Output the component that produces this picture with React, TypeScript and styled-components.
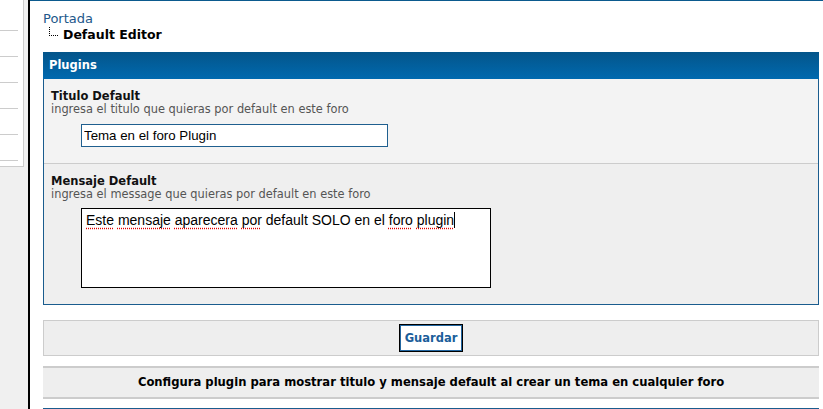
import React from 'react';
import styled, { createGlobalStyle } from 'styled-components';

const GlobalStyle = createGlobalStyle`
  html, body {
    margin: 0;
    padding: 0;
    background: #ffffff;
    font-family: "DejaVu Sans", Verdana, sans-serif;
  }
`;

const Page = styled.div`
  display: flex;
  width: 823px;
  height: 409px;
  overflow: hidden;
`;

const Sidebar = styled.aside`
  width: 28px;
  flex-shrink: 0;
  background: #f0f0f0;
  border-right: 2px solid #000000;
`;

const SideBox = styled.div`
  width: 18px;
  padding: 5px 5px 5px 0;
  background: #ffffff;
  border-right: 1px solid #cccccc;
  border-bottom: 1px solid #cccccc;
`;

const SideRow = styled.div`
  height: 25px;
  border-bottom: 1px solid #cccccc;
`;

const Content = styled.main`
  flex: 1;
  border-top: 1px solid #0b5a8e;
  padding: 0 4px 0 13px;
`;

const Breadcrumb = styled.div`
  padding-top: 10px;
  height: 51px;
  box-sizing: border-box;
`;

const CrumbLink = styled.a`
  display: block;
  color: #22578a;
  font-size: 13px;
  line-height: 16px;
  text-decoration: none;
`;

const CrumbCurrent = styled.div`
  position: relative;
  padding-left: 20px;
  font-size: 12.5px;
  font-weight: bold;
  line-height: 16px;
  color: #000000;

  &::before {
    content: '';
    position: absolute;
    left: 6px;
    top: 0;
    width: 8px;
    height: 8px;
    border-left: 1px dotted #000000;
    border-bottom: 1px dotted #000000;
  }
`;

const Panel = styled.section`
  border: 1px solid #1a5c8e;
  border-top: none;
`;

const PanelHeader = styled.div`
  height: 27px;
  margin: 0 -1px;
  padding: 0 6px;
  background: linear-gradient(#04558a, #0069af);
  color: #ffffff;
  font-size: 11.5px;
  font-weight: bold;
  line-height: 27px;
`;

const FieldRow = styled.div<{ $bg: string; $height: number; $last?: boolean }>`
  height: ${(p) => p.$height}px;
  box-sizing: border-box;
  padding: 10px 7px 0;
  background: ${(p) => p.$bg};
  border-bottom: ${(p) => (p.$last ? 'none' : '1px solid #cccccc')};
`;

const FieldTitle = styled.div`
  font-size: 11.5px;
  font-weight: bold;
  line-height: 14px;
  color: #111111;
`;

const FieldHint = styled.div`
  font-size: 11.4px;
  line-height: 13px;
  color: #555555;
`;

const TextInput = styled.input`
  display: block;
  margin: 8px 0 0 30px;
  width: 307px;
  height: 23px;
  box-sizing: border-box;
  padding: 0 2px;
  border: 1px solid #1f5f8f;
  background: #ffffff;
  font-family: "Liberation Sans", Arial, sans-serif;
  font-size: 13.3px;
  color: #000000;
  outline: none;
`;

const TextBox = styled.div`
  margin: 7px 0 0 30px;
  width: 410px;
  height: 80px;
  box-sizing: border-box;
  padding: 3px 4px;
  border: 1px solid #000000;
  background: #ffffff;
  font-family: "Liberation Sans", Arial, sans-serif;
  font-size: 14px;
  line-height: 17px;
  color: #000000;
`;

const Misspelled = styled.span`
  text-decoration: underline dotted #e00000;
  text-underline-offset: 3px;
`;

const Caret = styled.span`
  display: inline-block;
  width: 1px;
  height: 16px;
  background: #000000;
  vertical-align: -3px;
`;

const ButtonBar = styled.div`
  margin-top: 15px;
  height: 36px;
  box-sizing: border-box;
  border: 1px solid #cccccc;
  background: #eeeeee;
  display: flex;
  justify-content: center;
  align-items: center;
`;

const SaveButton = styled.button`
  width: 64px;
  height: 28px;
  padding: 0;
  border: 1px solid #000000;
  box-shadow: inset 0 0 0 1px #2266a0;
  background: #ffffff;
  color: #1b5e9a;
  font-family: "DejaVu Sans", Verdana, sans-serif;
  font-size: 11.5px;
  font-weight: bold;
  cursor: pointer;
`;

const InfoBar = styled.div`
  margin-top: 10px;
  height: 33px;
  box-sizing: border-box;
  border-top: 2px solid #cccccc;
  border-bottom: 2px solid #cccccc;
  background: #eeeeee;
  text-align: center;
  font-size: 11.6px;
  font-weight: bold;
  line-height: 29px;
  color: #000000;
`;

const NextPanel = styled.div`
  margin-top: 9px;
  border-top: 2px solid #1a5c8e;
`;

export default function App() {
  return (
    <>
      <GlobalStyle />
      <Page>
        <Sidebar>
          <SideBox>
            {[0, 1, 2, 3, 4, 5].map((i) => (
              <SideRow key={i} />
            ))}
          </SideBox>
        </Sidebar>
        <Content>
          <Breadcrumb>
            <CrumbLink href="#">Portada</CrumbLink>
            <CrumbCurrent>Default Editor</CrumbCurrent>
          </Breadcrumb>
          <Panel>
            <PanelHeader>Plugins</PanelHeader>
            <FieldRow $bg="#f3f3f3" $height={85}>
              <FieldTitle>Titulo Default</FieldTitle>
              <FieldHint>ingresa el titulo que quieras por default en este foro</FieldHint>
              <TextInput defaultValue="Tema en el foro Plugin" />
            </FieldRow>
            <FieldRow $bg="#efefef" $height={140} $last>
              <FieldTitle>Mensaje Default</FieldTitle>
              <FieldHint>ingresa el message que quieras por default en este foro</FieldHint>
              <TextBox>
                <Misspelled>Este</Misspelled> <Misspelled>mensaje</Misspelled>{' '}
                <Misspelled>aparecera</Misspelled> <Misspelled>por</Misspelled> default SOLO en el{' '}
                <Misspelled>foro</Misspelled> <Misspelled>plugin</Misspelled>
                <Caret />
              </TextBox>
            </FieldRow>
          </Panel>
          <ButtonBar>
            <SaveButton type="button">Guardar</SaveButton>
          </ButtonBar>
          <InfoBar>
            Configura plugin para mostrar titulo y mensaje default al crear un tema en cualquier foro
          </InfoBar>
          <NextPanel />
        </Content>
      </Page>
    </>
  );
}
